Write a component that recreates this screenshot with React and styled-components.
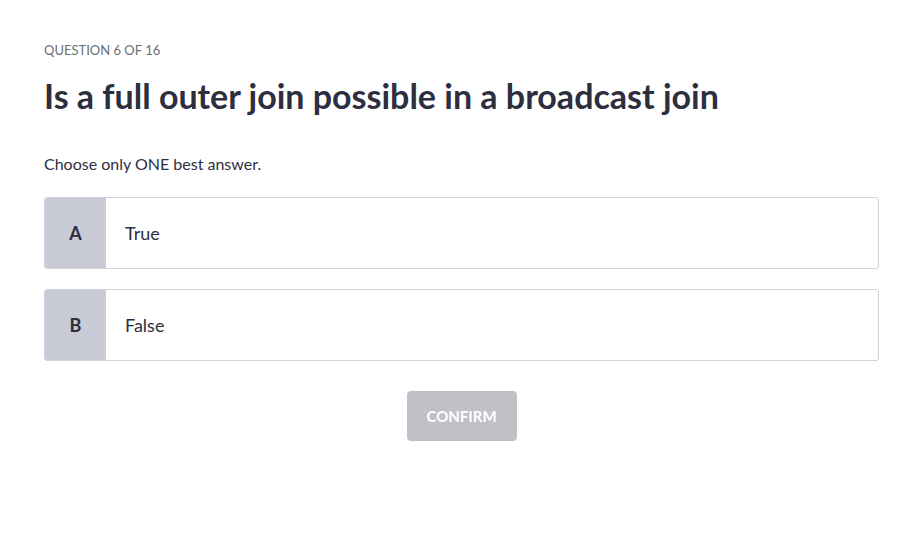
import styled, { createGlobalStyle } from 'styled-components';

const GlobalStyle = createGlobalStyle`
  body {
    margin: 0;
    background: #fff;
    font-family: Lato, "Open Sans", sans-serif;
    color: #2d2f3f;
  }
`;

const options = [
  { letter: 'A', text: 'True' },
  { letter: 'B', text: 'False' },
];

export default function App() {
  return (
    <>
      <GlobalStyle />
      <Page>
        <Counter>QUESTION 6 OF 16</Counter>
        <Title>Is a full outer join possible in a broadcast join</Title>
        <Prompt>Choose only ONE best answer.</Prompt>
        <OptionList>
          {options.map((o) => (
            <Option key={o.letter}>
              <Letter>{o.letter}</Letter>
              <OptionText>{o.text}</OptionText>
            </Option>
          ))}
        </OptionList>
        <Footer>
          <ConfirmButton disabled>CONFIRM</ConfirmButton>
        </Footer>
      </Page>
    </>
  );
}

const Page = styled.main`
  width: 835px;
  padding: 41px 0 0 44px;
`;

const Counter = styled.div`
  font-size: 13px;
  line-height: 18px;
  color: #6a6f73;
`;

const Title = styled.h1`
  margin: 16px 0 0;
  font-size: 34px;
  line-height: 42px;
  font-weight: 700;
  color: #2d2f3f;
`;

const Prompt = styled.p`
  margin: 36px 0 0;
  font-size: 16px;
  line-height: 22px;
`;

const OptionList = styled.div`
  display: flex;
  flex-direction: column;
  gap: 20px;
  margin-top: 22px;
`;

const Option = styled.div`
  display: flex;
  height: 72px;
  border: 1px solid #d1d0dc;
  border-radius: 3px;
  overflow: hidden;
  box-sizing: border-box;
  background: #fff;
`;

const Letter = styled.div`
  width: 61px;
  display: flex;
  align-items: center;
  justify-content: center;
  background: #c9ccd6;
  font-size: 18px;
  font-weight: 700;
  color: #2d2f3f;
`;

const OptionText = styled.div`
  display: flex;
  align-items: center;
  padding-left: 19px;
  font-size: 18px;
  color: #2d2f3f;
`;

const Footer = styled.div`
  display: flex;
  justify-content: center;
  margin-top: 30px;
`;

const ConfirmButton = styled.button`
  width: 110px;
  height: 50px;
  border: none;
  border-radius: 4px;
  background: #c0c1c7;
  color: #fff;
  font-family: Lato, sans-serif;
  font-size: 15px;
  font-weight: 700;
`;
